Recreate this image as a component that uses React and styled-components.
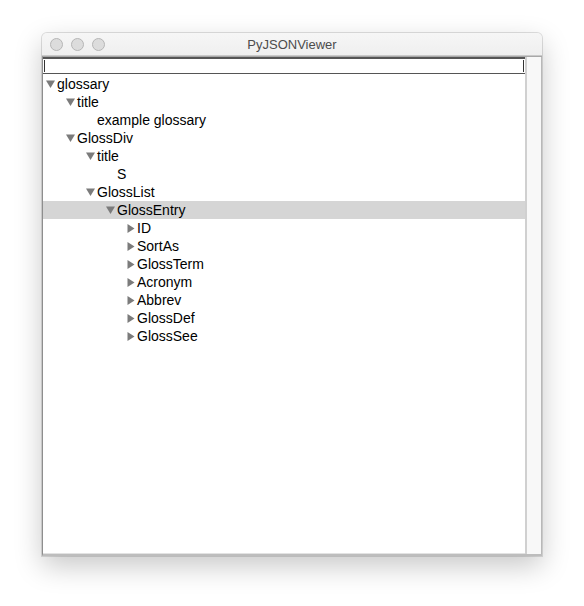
import React from 'react';
import styled, { createGlobalStyle } from 'styled-components';

const GlobalStyle = createGlobalStyle`
  html, body {
    margin: 0;
    padding: 0;
    background: #ffffff;
  }
  body {
    font-family: "Liberation Sans", Arial, sans-serif;
  }
`;

const Page = styled.div`
  width: 584px;
  height: 606px;
  padding: 33px 0 0 42px;
  box-sizing: border-box;
`;

const Window = styled.div`
  width: 500px;
  height: 523px;
  display: flex;
  flex-direction: column;
  border-radius: 5px 5px 0 0;
  box-shadow: 0 10px 28px rgba(0, 0, 0, 0.22), 0 0 0 1px rgba(0, 0, 0, 0.12);
  background: #ececec;
`;

const TitleBar = styled.div`
  position: relative;
  height: 22px;
  flex: none;
  display: flex;
  align-items: center;
  justify-content: center;
  background: linear-gradient(#f6f6f6, #efefef);
  border-radius: 5px 5px 0 0;
  border-bottom: 1px solid #c9c9c9;
  font-size: 13px;
  color: #4c4c4c;
`;

const Lights = styled.div`
  position: absolute;
  left: 8px;
  top: 5px;
  display: flex;
  gap: 8px;
`;

const Light = styled.span`
  width: 11px;
  height: 11px;
  border-radius: 50%;
  background: #dcdcdc;
  border: 1px solid #b6b6b6;
  box-sizing: content-box;
`;

const Body = styled.div`
  flex: 1;
  display: flex;
  min-height: 0;
  border-left: 1px solid #8e8e8e;
  border-bottom: 2px solid #bdbdbd;
  border-top: 1px solid #a8a8a8;
`;

const Main = styled.div`
  flex: 1;
  display: flex;
  flex-direction: column;
  background: #ffffff;
  border-bottom: 1px solid #e2e2e2;
`;

const Entry = styled.div`
  height: 14px;
  flex: none;
  border-top: 2px solid #555555;
  border-bottom: 1px solid #555555;
  position: relative;
  background: #ffffff;

  &::before,
  &::after {
    content: '';
    position: absolute;
    top: 1px;
    bottom: 1px;
    width: 1px;
    background: #333333;
  }
  &::before {
    left: 1px;
  }
  &::after {
    right: 1px;
  }
`;

const Tree = styled.div`
  flex: 1;
  padding-top: 1px;
`;

const Row = styled.div`
  height: 18px;
  display: flex;
  align-items: center;
  padding-left: ${(p) => 3 + p.$depth * 20}px;
  background: ${(p) => (p.$selected ? '#d5d5d5' : 'transparent')};
  font-size: 14px;
  color: #000000;
`;

const Toggle = styled.span`
  width: 11px;
  flex: none;
  display: flex;
  align-items: center;
  justify-content: flex-start;
  margin-left: ${(p) => (p.$open ? 0 : 1)}px;
  margin-right: ${(p) => (p.$open ? 0 : -1)}px;
`;

const Spacer = styled.span`
  width: 11px;
  flex: none;
`;

const Label = styled.span`
  white-space: nowrap;
  line-height: 18px;
`;

const Scroll = styled.div`
  width: 14px;
  flex: none;
  background: #f8f8f8;
  border-left: 2px solid #d0d0d0;
  border-right: 1px solid #b8b8b8;
`;

const Arrow = ({ open }) =>
  open ? (
    <svg width="9" height="8" viewBox="0 0 9 8">
      <polygon points="0,0.5 9,0.5 4.5,8" fill="#7b7b7b" />
    </svg>
  ) : (
    <svg width="8" height="9" viewBox="0 0 8 9">
      <polygon points="0.5,0 7.5,4.5 0.5,9" fill="#7b7b7b" />
    </svg>
  );

const rows = [
  { depth: 0, label: 'glossary', open: true },
  { depth: 1, label: 'title', open: true },
  { depth: 2, label: 'example glossary', leaf: true },
  { depth: 1, label: 'GlossDiv', open: true },
  { depth: 2, label: 'title', open: true },
  { depth: 3, label: 'S', leaf: true },
  { depth: 2, label: 'GlossList', open: true },
  { depth: 3, label: 'GlossEntry', open: true, selected: true },
  { depth: 4, label: 'ID' },
  { depth: 4, label: 'SortAs' },
  { depth: 4, label: 'GlossTerm' },
  { depth: 4, label: 'Acronym' },
  { depth: 4, label: 'Abbrev' },
  { depth: 4, label: 'GlossDef' },
  { depth: 4, label: 'GlossSee' },
];

const App = () => (
  <Page>
    <GlobalStyle />
    <Window>
      <TitleBar>
        <Lights>
          <Light />
          <Light />
          <Light />
        </Lights>
        PyJSONViewer
      </TitleBar>
      <Body>
        <Main>
          <Entry />
          <Tree>
            {rows.map((r, i) => (
              <Row key={i} $depth={r.depth} $selected={r.selected}>
                {r.leaf ? (
                  <Spacer />
                ) : (
                  <Toggle $open={r.open}>
                    <Arrow open={r.open} />
                  </Toggle>
                )}
                <Label>{r.label}</Label>
              </Row>
            ))}
          </Tree>
        </Main>
        <Scroll />
      </Body>
    </Window>
  </Page>
);

export default App;
